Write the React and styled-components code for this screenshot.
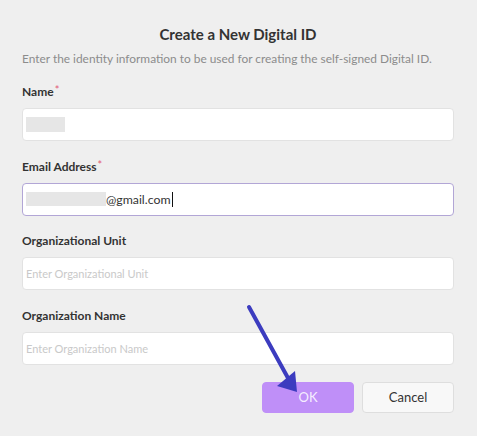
import React from "react";
import styled, { createGlobalStyle } from "styled-components";

const Global = createGlobalStyle`
  html, body {
    margin: 0;
    padding: 0;
    background: #efefef;
  }
  body {
    font-family: "Lato", "Open Sans", sans-serif;
    color: #333;
  }
`;

const Dialog = styled.div`
  position: relative;
  width: 477px;
  height: 436px;
  box-sizing: border-box;
  padding: 24px 23px 0 22px;
  background: #efefef;
  display: flex;
  flex-direction: column;
`;

const Title = styled.h1`
  margin: 0;
  font-size: 15px;
  line-height: 20px;
  font-weight: 700;
  text-align: center;
  color: #333;
`;

const Subtitle = styled.p`
  margin: 7px 0 0;
  font-size: 11.9px;
  line-height: 16px;
  color: #8c8c8c;
  white-space: nowrap;
`;

const Form = styled.div`
  display: flex;
  flex-direction: column;
  gap: 17.5px;
  margin-top: 17px;
`;

const Field = styled.div`
  display: flex;
  flex-direction: column;
  gap: 8px;
`;

const Label = styled.label`
  font-size: 12px;
  line-height: 16px;
  font-weight: 700;
  color: #333;
  span {
    color: #e25c78;
    font-weight: 400;
    margin-left: 1px;
    font-size: 11px;
    position: relative;
    top: -2px;
  }
`;

const Box = styled.div`
  height: 33px;
  box-sizing: border-box;
  background: #fff;
  border: 1px solid ${(p) => (p.$focused ? "#b2a6d6" : "#e2e2e2")};
  border-radius: 4px;
  padding: 0 3px;
  display: flex;
  align-items: center;
  font-size: 12px;
  color: #333;
`;

const Placeholder = styled.span`
  color: #c9c9c9;
  font-size: 11px;
`;

const Redacted = styled.span`
  display: inline-block;
  width: ${(p) => p.$w}px;
  height: ${(p) => p.$h || 15}px;
  background: #e6e6e6;
`;

const Value = styled.span`
  font-size: 12.3px;
  color: #333;
`;

const Caret = styled.span`
  display: inline-block;
  width: 1px;
  height: 15px;
  background: #111;
  margin-left: 1px;
`;

const Actions = styled.div`
  display: flex;
  justify-content: flex-end;
  gap: 8px;
  margin-top: 17px;
`;

const Button = styled.button`
  width: 92px;
  height: 31px;
  box-sizing: border-box;
  border-radius: 4px;
  font-family: inherit;
  font-size: 13px;
  cursor: pointer;
  border: 1px solid ${(p) => (p.$primary ? "#bf8ff8" : "#dedede")};
  background: ${(p) => (p.$primary ? "#bf8ff8" : "#f8f8f8")};
  color: ${(p) => (p.$primary ? "#f5edff" : "#333")};
`;

const Pointer = styled.svg`
  position: absolute;
  left: 0;
  top: 0;
  pointer-events: none;
`;

export default function App() {
  return (
    <>
      <Global />
      <Dialog>
        <Title>Create a New Digital ID</Title>
        <Subtitle>
          Enter the identity information to be used for creating the self-signed Digital ID.
        </Subtitle>
        <Form>
          <Field>
            <Label>
              Name<span>*</span>
            </Label>
            <Box>
              <Redacted $w={39} />
            </Box>
          </Field>
          <Field>
            <Label>
              Email Address<span>*</span>
            </Label>
            <Box $focused>
              <Redacted $w={80} $h={14} />
              <Value>@gmail.com</Value>
              <Caret />
            </Box>
          </Field>
          <Field>
            <Label>Organizational Unit</Label>
            <Box>
              <Placeholder>Enter Organizational Unit</Placeholder>
            </Box>
          </Field>
          <Field>
            <Label>Organization Name</Label>
            <Box>
              <Placeholder>Enter Organization Name</Placeholder>
            </Box>
          </Field>
        </Form>
        <Actions>
          <Button $primary>OK</Button>
          <Button>Cancel</Button>
        </Actions>
        <Pointer width="477" height="436" viewBox="0 0 477 436">
          <line x1="249" y1="307" x2="288" y2="378" stroke="#3c3cbf" strokeWidth="4" strokeLinecap="round" />
          <polygon points="297,392 277,386 295,371" fill="#3c3cbf" />
        </Pointer>
      </Dialog>
    </>
  );
}
